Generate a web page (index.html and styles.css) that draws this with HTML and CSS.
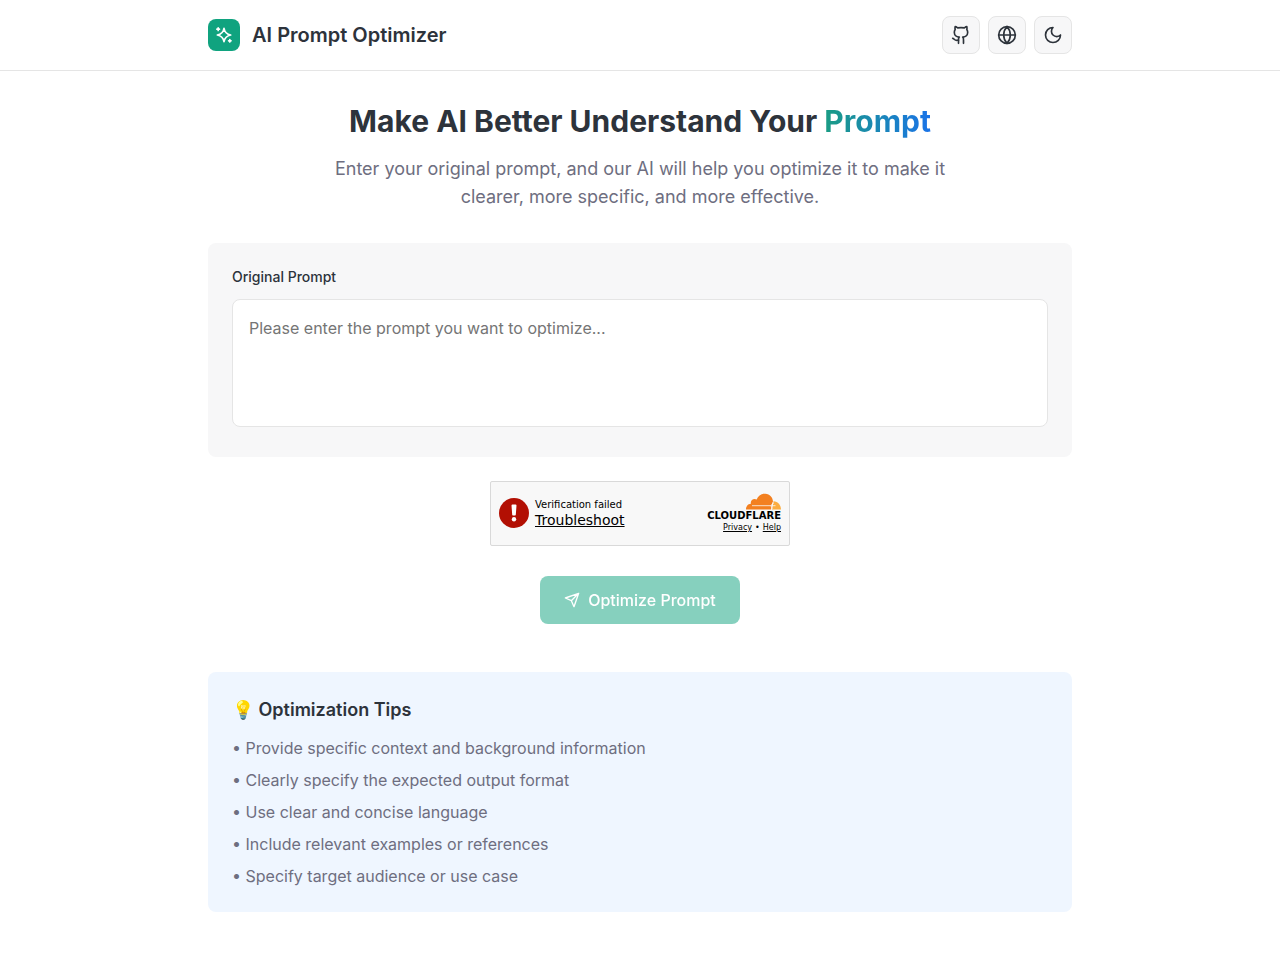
FILE: index.html
```
<!DOCTYPE html>
<html lang="en">
<head>
  <meta charset="UTF-8">
  <meta name="viewport" content="width=device-width, initial-scale=1">
  <title>AI Prompt Optimizer</title>
  <link rel="stylesheet" href="styles.css">
</head>
<body>
  <header class="header">
    <div class="container header-row">
      <div class="brand">
        <span class="brand-logo">
          <svg class="icon" viewBox="0 0 24 24" aria-hidden="true">
            <path d="M12 4c.8 4.500 3.500 7.200 8 8-4.500.8-7.200 3.500-8 8-.8-4.500-3.500-7.200-8-8 4.500-.8 7.200-3.500 8-8z"/>
            <path d="M5 3.500v3M3.500 5h3M19 17.500v3M17.500 19h3"/>
          </svg>
        </span>
        <span class="brand-name">AI Prompt Optimizer</span>
      </div>
      <div class="actions">
        <a class="icon-btn" href="#" aria-label="GitHub">
          <svg class="icon" viewBox="0 0 24 24" aria-hidden="true">
            <path d="M15 22v-4a4.800 4.800 0 0 0-1-3.500c3 0 6-2 6-5.500.08-1.250-.27-2.480-1-3.500.28-1.150.28-2.350 0-3.500 0 0-1 0-3 1.500-2.640-.5-5.360-.5-8 0C6 2 5 2 5 2c-.3 1.150-.3 2.350 0 3.500A5.403 5.403 0 0 0 4 9c0 3.500 3 5.500 6 5.500-.39.490-.68 1.050-.85 1.650-.17.600-.22 1.230-.15 1.850v4"/>
            <path d="M9 18c-4.510 2-5-2-7-2"/>
          </svg>
        </a>
        <button class="icon-btn" type="button" aria-label="Language">
          <svg class="icon" viewBox="0 0 24 24" aria-hidden="true">
            <circle cx="12" cy="12" r="10"/>
            <path d="M12 2a14.500 14.500 0 0 0 0 20 14.500 14.500 0 0 0 0-20M2 12h20"/>
          </svg>
        </button>
        <button class="icon-btn" type="button" aria-label="Dark mode">
          <svg class="icon" viewBox="0 0 24 24" aria-hidden="true">
            <path d="M12 3a6 6 0 0 0 9 9 9 9 0 1 1-9-9Z"/>
          </svg>
        </button>
      </div>
    </div>
  </header>

  <main class="container main">
    <section class="hero">
      <h1 class="hero-title">Make AI Better Understand Your <span class="gradient">Prompt</span></h1>
      <p class="hero-text">Enter your original prompt, and our AI will help you optimize it to make it clearer, more specific, and more effective.</p>
    </section>

    <form class="form">
      <div class="card">
        <label class="label" for="prompt">Original Prompt</label>
        <textarea class="textarea" id="prompt" placeholder="Please enter the prompt you want to optimize..."></textarea>
      </div>

      <div class="captcha">
        <svg class="captcha-icon" viewBox="0 0 30 30" aria-hidden="true">
          <circle cx="15" cy="15" r="15" fill="#b20f03"/>
          <path d="M12.500 7.500a1 1 0 0 1 1-1h3a1 1 0 0 1 1 1l-.7 9.200a.8.8 0 0 1-.8.800h-2a.8.8 0 0 1-.8-.800z" fill="#fff"/>
          <circle cx="15" cy="21.200" r="2.200" fill="#fff"/>
        </svg>
        <div class="captcha-status">
          <span>Verification failed</span>
          <a class="captcha-link" href="#">Troubleshoot</a>
        </div>
        <div class="captcha-brand">
          <svg class="cloud" viewBox="-1 -1 36 18" aria-hidden="true">
            <path d="M25 16.500H0C0 13.500 1.800 11 4.900 10.800 4 7.300 7.800 4.700 10.700 6.500 12 2.400 15.600.5 19.400.7c4.400.3 7.300 3.500 7.600 7.800-1.300 1.600-.8 3.900-2 8z" fill="#f38020"/>
            <path d="M26 16.500c.5-2.400 1-4.500 1.500-8.300 4.600.2 7.400 3.600 7.500 8.300z" fill="#fbad41"/>
            <path d="M6 12.700h18.500M24.500 12.700l3.500-3M24.500 12.700h5M26 16l-.8-3.300" fill="none" stroke="#f8f8f8" stroke-width=".8"/>
          </svg>
          <span class="wordmark">CLOUDFLARE</span>
          <span class="captcha-terms"><a href="#">Privacy</a><span>•</span><a href="#">Help</a></span>
        </div>
      </div>

      <button class="submit" type="button" disabled>
        <svg class="icon submit-icon" viewBox="0 0 24 24" aria-hidden="true">
          <path d="m22 2-7 20-4-9-9-4ZM22 2 11 13"/>
        </svg>
        Optimize Prompt
      </button>
    </form>

    <section class="tips">
      <h2 class="tips-title">💡 Optimization Tips</h2>
      <ul class="tips-list">
        <li>• Provide specific context and background information</li>
        <li>• Clearly specify the expected output format</li>
        <li>• Use clear and concise language</li>
        <li>• Include relevant examples or references</li>
        <li>• Specify target audience or use case</li>
      </ul>
    </section>
  </main>
</body>
</html>
```
FILE: styles.css
```
* {
  box-sizing: border-box;
}
body {
  margin: 0;
  background: #fff;
  color: #2d333b;
  font-family: Inter, "Liberation Sans", sans-serif;
  font-size: 16px;
  line-height: 24px;
}
h1, h2, p, ul {
  margin: 0;
}
button, textarea {
  font: inherit;
}
.container {
  max-width: 896px;
  margin: 0 auto;
  padding: 0 16px;
}
.icon {
  width: 20px;
  height: 20px;
  fill: none;
  stroke: currentColor;
  stroke-width: 2;
  stroke-linecap: round;
  stroke-linejoin: round;
}

/* header */
.header {
  padding: 16px 0;
  border-bottom: 1px solid #e5e5e5;
}
.header-row, .brand, .actions {
  display: flex;
  align-items: center;
}
.header-row {
  justify-content: space-between;
}
.brand {
  gap: 12px;
}
.brand-logo {
  display: grid;
  place-items: center;
  width: 32px;
  height: 32px;
  border-radius: 8px;
  background: #10a37f;
  color: #fff;
}
.brand-name {
  font-size: 20px;
  line-height: 28px;
  font-weight: 600;
}
.actions {
  gap: 8px;
}
.icon-btn {
  display: grid;
  place-items: center;
  width: 38px;
  height: 38px;
  padding: 0;
  border: 1px solid #e5e5e5;
  border-radius: 8px;
  background: #f7f7f8;
  color: #2d333b;
  cursor: pointer;
}

/* hero */
.main {
  padding-top: 32px;
  padding-bottom: 32px;
}
.hero {
  margin-bottom: 32px;
  text-align: center;
}
.hero-title {
  margin-bottom: 16px;
  font-size: 30px;
  line-height: 36px;
  font-weight: 700;
}
.gradient {
  background: linear-gradient(to right, #1a9c83, #1a73e8);
  background-clip: text;
  -webkit-background-clip: text;
  color: transparent;
}
.hero-text {
  max-width: 672px;
  margin: 0 auto;
  font-size: 18px;
  line-height: 28px;
  color: #6e6e80;
}

/* form */
.form {
  display: flex;
  flex-direction: column;
  align-items: center;
}
.card {
  width: 100%;
  padding: 24px 24px 30px;
  border-radius: 8px;
  background: #f7f7f8;
}
.label {
  display: block;
  margin-bottom: 12px;
  font-size: 14px;
  line-height: 20px;
  font-weight: 500;
}
.textarea {
  display: block;
  width: 100%;
  height: 128px;
  padding: 16px;
  border: 1px solid #e5e5e5;
  border-radius: 8px;
  background: #fff;
  color: #2d333b;
  resize: none;
}
.textarea::placeholder {
  color: #757575;
}

/* verification box */
.captcha {
  display: flex;
  align-items: center;
  width: 300px;
  height: 65px;
  margin: 24px 0 30px;
  padding: 0 8px 1px;
  border: 1px solid #d9d9d9;
  border-radius: 2px;
  background: #f8f8f8;
  color: #000;
  font-family: "DejaVu Sans", sans-serif;
}
.captcha a {
  color: inherit;
}
.captcha-icon {
  width: 30px;
  height: 30px;
  margin-right: 6px;
}
.captcha-status {
  display: flex;
  flex-direction: column;
  font-size: 10px;
  line-height: 14px;
}
.captcha-link {
  font-size: 14px;
  line-height: 16px;
}
.captcha-brand {
  display: flex;
  flex-direction: column;
  align-items: flex-end;
  margin-left: auto;
}
.cloud {
  width: 36px;
  height: 18px;
}
.wordmark {
  font-size: 10px;
  line-height: 11px;
  font-weight: 700;
}
.captcha-terms {
  display: flex;
  gap: 3px;
  font-size: 8px;
  line-height: 13px;
}

.submit {
  display: flex;
  align-items: center;
  gap: 8px;
  padding: 12px 24px;
  border: 0;
  border-radius: 8px;
  background: #10a37f;
  color: #fff;
  font-weight: 500;
}
.submit:disabled {
  opacity: 0.5;
}
.submit-icon {
  width: 16px;
  height: 16px;
}

/* tips */
.tips {
  margin-top: 48px;
  padding: 24px;
  border-radius: 8px;
  background: #eff6ff;
}
.tips-title {
  margin-bottom: 12px;
  font-size: 18px;
  line-height: 28px;
  font-weight: 600;
}
.tips-list {
  display: flex;
  flex-direction: column;
  gap: 8px;
  padding: 0;
  list-style: none;
  color: #6e6e80;
}
```
